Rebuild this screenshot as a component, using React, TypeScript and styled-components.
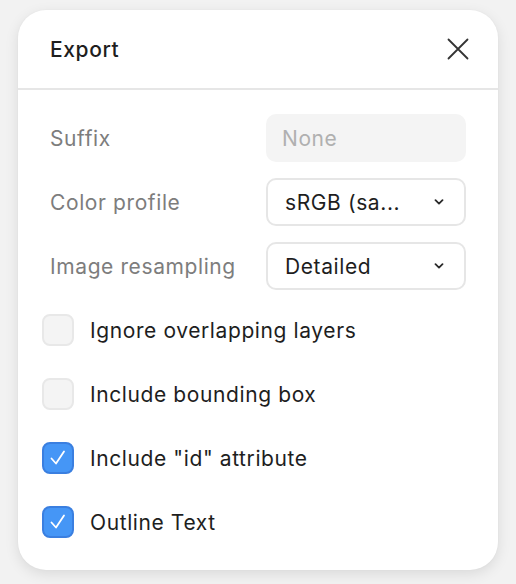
import styled, { createGlobalStyle } from 'styled-components';

const GlobalStyle = createGlobalStyle`
  html, body {
    margin: 0;
    padding: 0;
    background: #f2f2f2;
    font-family: Inter, "Noto Sans", sans-serif;
  }
`;

const Page = styled.div`
  width: 516px;
  height: 584px;
  padding: 10px 18px 0;
  box-sizing: border-box;
`;

const Card = styled.div`
  width: 480px;
  background: #ffffff;
  border-radius: 28px;
  box-shadow: 0 4px 14px rgba(0, 0, 0, 0.1), 0 0 2px rgba(0, 0, 0, 0.04);
  overflow: hidden;
`;

const Header = styled.div`
  height: 78px;
  display: flex;
  align-items: center;
  justify-content: space-between;
  padding: 0 28px 0 32px;
  border-bottom: 2px solid #e6e6e6;
`;

const Title = styled.h1`
  margin: 0;
  font-size: 21px;
  letter-spacing: 0.6px;
  font-weight: 500;
  color: #1e1e1e;
`;

const CloseButton = styled.button`
  background: none;
  border: none;
  padding: 0;
  width: 24px;
  height: 24px;
  display: flex;
  align-items: center;
  justify-content: center;
  cursor: pointer;
`;

const Body = styled.div`
  display: flex;
  flex-direction: column;
  gap: 16px;
  padding: 24px 32px 24px;
`;

const FieldRow = styled.div`
  height: 48px;
  display: flex;
  align-items: center;
  justify-content: space-between;
`;

const Label = styled.span`
  font-size: 21px;
  letter-spacing: 0.6px;
  color: #7d7d7d;
`;

const TextInput = styled.div`
  width: 200px;
  height: 48px;
  box-sizing: border-box;
  border-radius: 10px;
  background: #f4f4f4;
  padding: 0 16px;
  display: flex;
  align-items: center;
  font-size: 21px;
  letter-spacing: 0.6px;
  color: #b0b0b0;
`;

const Select = styled.div`
  width: 200px;
  height: 48px;
  box-sizing: border-box;
  border-radius: 10px;
  border: 2px solid #e6e6e6;
  padding: 0 20px 0 17px;
  display: flex;
  align-items: center;
  justify-content: space-between;
  font-size: 21px;
  letter-spacing: 0.6px;
  color: #1e1e1e;
`;

const CheckRow = styled.label`
  height: 48px;
  display: flex;
  align-items: center;
  gap: 16px;
  margin-left: -8px;
  font-size: 21px;
  letter-spacing: 0.6px;
  color: #1e1e1e;
`;

const Box = styled.span<{ $checked: boolean }>`
  width: 32px;
  height: 32px;
  box-sizing: border-box;
  border-radius: 8px;
  display: flex;
  align-items: center;
  justify-content: center;
  background: ${(p) => (p.$checked ? '#4596f6' : '#f4f4f4')};
  border: 2px solid ${(p) => (p.$checked ? '#3a7fe0' : '#e8e8e8')};
`;

const Chevron = () => (
  <svg width="10" height="6" viewBox="0 0 10 6">
    <path d="M1.5 1.2 L5 4.6 L8.5 1.2" fill="none" stroke="#2a2a2a" strokeWidth="1.8" strokeLinecap="round" strokeLinejoin="round" />
  </svg>
);

const Check = () => (
  <svg width="20" height="20" viewBox="0 0 20 20">
    <path d="M3.5 10.5 L8 15.5 L16 3.5" fill="none" stroke="#ffffff" strokeWidth="1.8" strokeLinecap="round" strokeLinejoin="round" />
  </svg>
);

const options = [
  { label: 'Ignore overlapping layers', checked: false },
  { label: 'Include bounding box', checked: false },
  { label: 'Include "id" attribute', checked: true },
  { label: 'Outline Text', checked: true },
];

export default function App() {
  return (
    <Page>
      <GlobalStyle />
      <Card>
        <Header>
          <Title>Export</Title>
          <CloseButton aria-label="Close">
            <svg width="22" height="22" viewBox="0 0 22 22">
              <path d="M1.5 1.5 L20.5 20.5 M20.5 1.5 L1.5 20.5" stroke="#333" strokeWidth="1.8" strokeLinecap="round" />
            </svg>
          </CloseButton>
        </Header>
        <Body>
          <FieldRow>
            <Label>Suffix</Label>
            <TextInput>None</TextInput>
          </FieldRow>
          <FieldRow>
            <Label>Color profile</Label>
            <Select>
              sRGB (sa...
              <Chevron />
            </Select>
          </FieldRow>
          <FieldRow>
            <Label>Image resampling</Label>
            <Select>
              Detailed
              <Chevron />
            </Select>
          </FieldRow>
          {options.map((o) => (
            <CheckRow key={o.label}>
              <Box $checked={o.checked}>{o.checked && <Check />}</Box>
              {o.label}
            </CheckRow>
          ))}
        </Body>
      </Card>
    </Page>
  );
}
